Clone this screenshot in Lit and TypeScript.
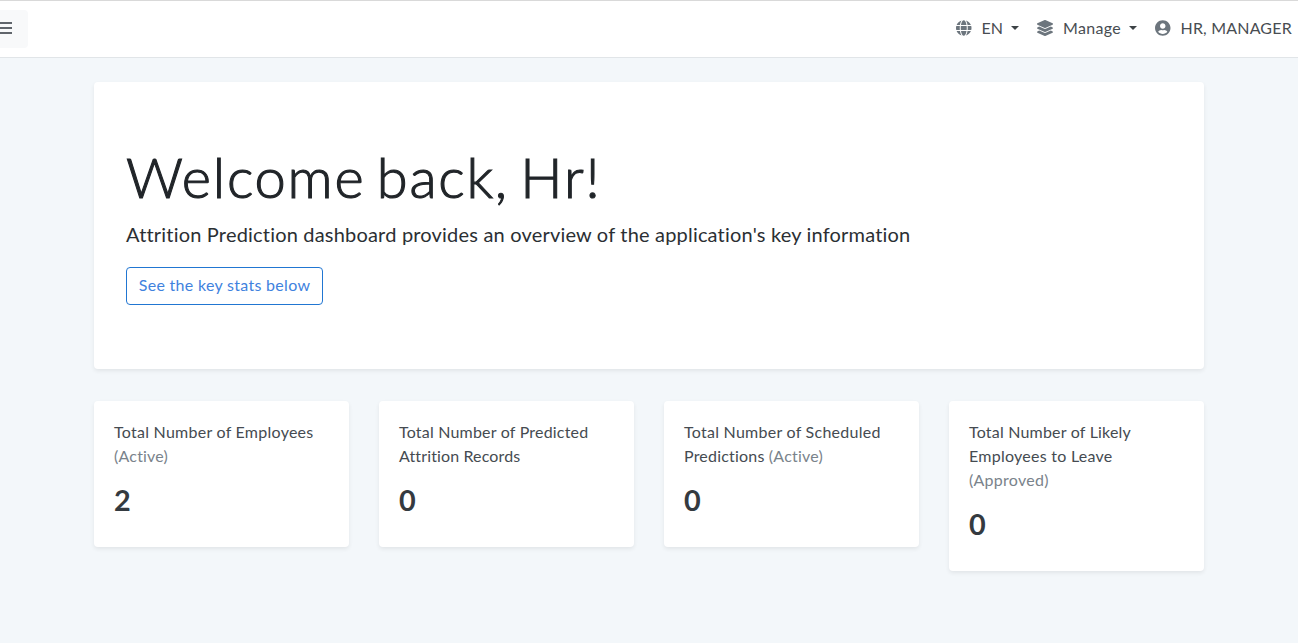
import { LitElement, html, css, svg } from "lit";
import { customElement } from "lit/decorators.js";

const GLOBE =
  "M336.5 160C322 70.7 287.8 8 248 8s-74 62.7-88.5 152h177zM152 256c0 22.2 1.2 43.5 3.3 64h185.3c2.1-20.5 3.3-41.8 3.3-64s-1.2-43.5-3.3-64H155.3c-2.1 20.5-3.3 41.8-3.3 64zm324.7-96c-28.6-67.9-86.5-120.4-158-141.6 24.4 33.8 41.2 84.7 50 141.6h108zM177.2 18.4C105.8 39.6 47.8 92.1 19.3 160h108c8.7-56.9 25.5-107.8 49.9-141.6zM487.4 192H372.7c2.1 21 3.3 42.5 3.3 64s-1.2 43-3.3 64h114.6c5.5-20.5 8.6-41.8 8.6-64s-3.1-43.5-8.5-64zM120 256c0-21.5 1.2-43 3.3-64H8.6C3.2 212.5 0 233.8 0 256s3.2 43.5 8.6 64h114.6c-2-21-3.2-42.5-3.2-64zm39.5 96c14.5 89.3 48.7 152 88.5 152s74-62.7 88.5-152h-177zm159.3 141.6c71.4-21.2 129.4-73.7 158-141.6h-108c-8.8 56.9-25.6 107.8-50 141.6zM19.3 352c28.6 67.9 86.5 120.4 158 141.6-24.4-33.8-41.2-84.7-50-141.6h-108z";
const LAYERS =
  "M12.41 148.02l232.94 105.67c6.8 3.09 14.49 3.09 21.29 0l232.94-105.67c16.55-7.51 16.55-32.52 0-40.03L266.65 2.31a25.607 25.607 0 0 0-21.29 0L12.41 107.98c-16.55 7.51-16.55 32.53 0 40.04zm487.18 88.28l-58.09-26.33-161.64 73.27c-7.56 3.43-15.59 5.17-23.86 5.17s-16.29-1.74-23.86-5.17L70.51 209.97l-58.1 26.33c-16.55 7.5-16.55 32.5 0 40l232.94 105.59c6.8 3.08 14.49 3.08 21.29 0L499.59 276.3c16.55-7.5 16.55-32.5 0-40zm0 127.8l-57.87-26.23-161.86 73.37c-7.56 3.43-15.59 5.17-23.86 5.17s-16.29-1.74-23.86-5.17L70.29 337.87 12.41 364.1c-16.55 7.5-16.55 32.5 0 40l232.94 105.59c6.8 3.08 14.49 3.08 21.29 0L499.59 404.1c16.55-7.5 16.55-32.5 0-40z";
const USER =
  "M248 8C111 8 0 119 0 256s111 248 248 248 248-111 248-248S385 8 248 8zm0 96c48.6 0 88 39.4 88 88s-39.4 88-88 88-88-39.4-88-88 39.4-88 88-88zm0 344c-58.7 0-111.3-26.6-146.5-68.2 18.8-35.4 55.6-59.8 98.5-59.8 2.4 0 4.8.4 7.1 1.1 13 4.2 26.6 6.9 40.9 6.9 14.3 0 28-2.7 40.9-6.9 2.3-.7 4.7-1.1 7.1-1.1 42.9 0 79.7 24.4 98.5 59.8C359.3 421.4 306.7 448 248 448z";

const icon = (d: string, w: number) => html`<svg
  class="icon" width=${w / 32} height="16" viewBox="0 0 ${w} 512" aria-hidden="true"
>${svg`<path d=${d} fill="currentColor"></path>`}</svg>`;

@customElement("app-root")
export class AppRoot extends LitElement {
  static styles = css`
    :host {
      display: block;
      height: 643px;
      overflow: hidden;
      box-sizing: border-box;
      background: #f3f7fa;
      border-top: 1px solid #d9d9d9;
      font: 400 16px/24px Lato, "Open Sans", sans-serif;
      color: #212529;
    }
    * { box-sizing: border-box; }
    .nav {
      display: flex;
      justify-content: space-between;
      align-items: center;
      height: 57px;
      background: #fff;
      border-bottom: 1px solid #e1e5e8;
    }
    .toggle {
      display: flex;
      align-items: center;
      width: 28px;
      height: 38px;
      padding: 0 0 2px;
      border: 0;
      border-radius: 0 4px 4px 0;
      background: #f8f9fa;
      color: #60656b;
    }
    .links { display: flex; align-items: center; padding-bottom: 2px; color: #484d52; }
    .link { display: flex; align-items: center; white-space: nowrap; }
    .link .icon { color: #6c757d; flex: none; }
    .label { margin-left: 10px; }
    .lang { width: 81px; }
    .manage { width: 118px; }
    .user { width: 143px; }
    .lang .label { width: 21px; }
    .manage .label { width: 58px; letter-spacing: 0.3px; }
    .user .label { letter-spacing: 0.18px; }
    .caret {
      margin-left: 8px;
      border: 4.8px solid transparent;
      border-top-color: #3d4246;
      border-bottom: 0;
    }
    .page { width: 1110px; margin: 24px auto 0; }
    .hero, .card {
      background: #fff;
      border-radius: 4px;
      box-shadow: 0 2px 4px rgba(0, 0, 0, 0.075);
    }
    .hero { height: 287px; padding: 64px 32px; }
    .title {
      margin: 0 0 14px;
      font-size: 56px;
      font-weight: 300;
      line-height: 61px;
      letter-spacing: 1.75px;
      word-spacing: -5.5px;
      -webkit-text-stroke: 1.1px currentColor;
      white-space: nowrap;
    }
    .lead {
      margin: 0 0 19px;
      font-size: 20px;
      line-height: 27px;
      letter-spacing: 0.19px;
      color: #2b2f33;
      white-space: nowrap;
    }
    .button {
      display: flex;
      align-items: center;
      justify-content: center;
      width: 197px;
      height: 38px;
      padding-bottom: 2px;
      border: 1px solid #2176d2;
      border-radius: 4px;
      color: #3f82de;
      letter-spacing: 0.3px;
      text-decoration: none;
      white-space: nowrap;
    }
    .cards {
      display: grid;
      grid-template-columns: repeat(4, 255px);
      gap: 30px;
      align-items: start;
      margin-top: 32px;
    }
    .card { padding: 19px 20px 20px; color: #343a40; }
    .line { display: block; letter-spacing: 0.2px; color: #454b51; white-space: nowrap; }
    .line.wide { letter-spacing: 0.26px; }
    .line.tight { letter-spacing: 0.13px; }
    .line .muted { color: #7a838b; }
    .value {
      margin: 13px 0 8px;
      font-size: 28.8px;
      line-height: 38px;
      font-weight: 700;
    }
  `;

  render() {
    const muted = (t: string) => html`<span class="muted">${t}</span>`;
    const cards = [
      { lines: [["Total Number of Employees", "wide"], [muted("(Active)"), ""]], value: 2 },
      { lines: [["Total Number of Predicted", ""], ["Attrition Records", "tight"]], value: 0 },
      { lines: [["Total Number of Scheduled", "wide"], [html`Predictions ${muted("(Active)")}`, ""]], value: 0 },
      { lines: [["Total Number of Likely", ""], ["Employees to Leave", "wide"], [muted("(Approved)"), "wide"]], value: 0 },
    ];
    return html`
      <nav class="nav">
        <button class="toggle" aria-label="Menu">
          <svg width="12" height="14" viewBox="0 0 12 14">
            <path d="M0 2h12M0 7h12M0 12h12" stroke="currentColor" stroke-width="2"></path>
          </svg>
        </button>
        <div class="links">
          <div class="link lang">${icon(GLOBE, 496)}<span class="label">EN</span><i class="caret"></i></div>
          <div class="link manage">${icon(LAYERS, 512)}<span class="label">Manage</span><i class="caret"></i></div>
          <div class="link user">${icon(USER, 496)}<span class="label">HR, MANAGER</span></div>
        </div>
      </nav>
      <main class="page">
        <section class="hero">
          <h1 class="title">Welcome back, Hr!</h1>
          <p class="lead">Attrition Prediction dashboard provides an overview of the application's key information</p>
          <a class="button">See the key stats below</a>
        </section>
        <section class="cards">
          ${cards.map(
            (c) => html`<article class="card">
              ${c.lines.map(([text, fit]) => html`<span class="line ${fit}">${text}</span>`)}
              <div class="value">${c.value}</div>
            </article>`
          )}
        </section>
      </main>
    `;
  }
}
